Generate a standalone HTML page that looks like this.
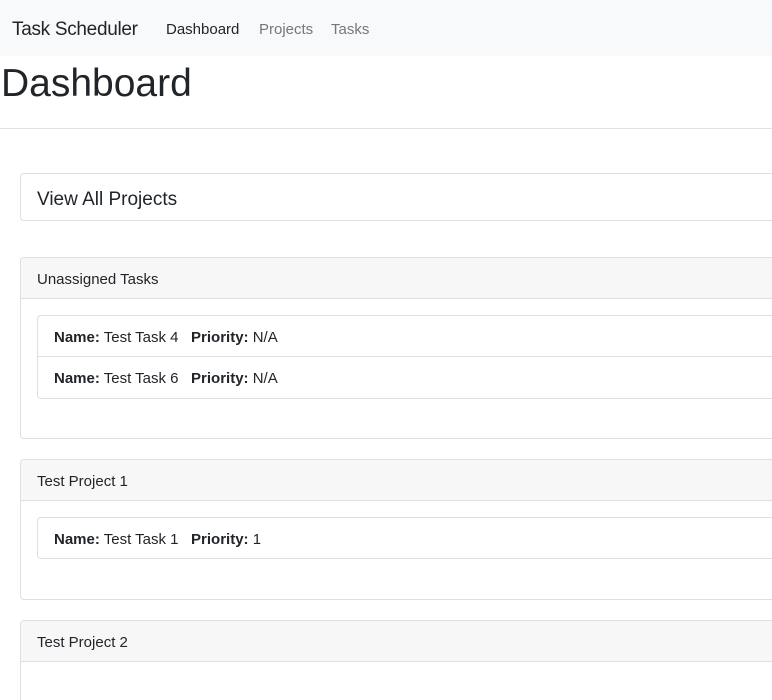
<!DOCTYPE html><html><head><style>
html,body{margin:0;width:772px;height:700px;overflow:hidden}
body{font-family:"Liberation Sans",sans-serif;color:#212529;position:relative;background:#fff}
.nav{position:absolute;left:0;top:0;width:772px;height:56px;background:#f8f9fa}
.a{position:absolute;white-space:nowrap}
.card{position:absolute;left:20px;width:752px;border:1px solid #dfdfdf;border-right:none;border-radius:4px 0 0 4px;box-sizing:border-box;overflow:hidden}
.hd{height:41px;background:#f7f7f7;border-bottom:1px solid #dfdfdf;box-sizing:border-box;padding-left:16px;line-height:44px;font-size:15px}
.lg{position:absolute;left:16px;width:735px;border:1px solid #dfdfdf;border-right:none;border-radius:4px 0 0 4px;box-sizing:border-box}
.it{height:40px;line-height:43px;padding-left:16px;font-size:15px}
.it+.it{border-top:1px solid #dfdfdf;height:41px}
b{font-weight:bold}
</style></head><body>
<div class="nav">
<div class="a" style="left:12px;top:19px;font-size:19px;letter-spacing:-0.3px">Task Scheduler</div>
<div class="a" style="left:166px;top:21px;font-size:15px">Dashboard</div>
<div class="a" style="left:259px;top:21px;font-size:15px;color:#777">Projects</div>
<div class="a" style="left:331px;top:21px;font-size:15px;color:#777">Tasks</div>
</div>
<div class="a" style="left:1px;top:62px;font-size:39px">Dashboard</div>
<div class="a" style="left:0;top:128px;width:772px;height:1px;background:#dee2e6"></div>
<div class="card" style="top:173px;height:48px"><div class="a" style="left:16px;top:15px;font-size:19px">View All Projects</div></div>
<div class="card" style="top:257px;height:182px"><div class="hd">Unassigned Tasks</div>
<div class="lg" style="top:57px"><div class="it"><b>Name:</b> Test Task 4 &nbsp;&nbsp;<b>Priority:</b> N/A</div><div class="it"><b>Name:</b> Test Task 6 &nbsp;&nbsp;<b>Priority:</b> N/A</div></div></div>
<div class="card" style="top:459px;height:141px"><div class="hd">Test Project 1</div>
<div class="lg" style="top:57px"><div class="it"><b>Name:</b> Test Task 1 &nbsp;&nbsp;<b>Priority:</b> 1</div></div></div>
<div class="card" style="top:620px;height:80px;border-bottom:none;border-radius:4px 0 0 0"><div class="hd">Test Project 2</div></div>
</body></html>
